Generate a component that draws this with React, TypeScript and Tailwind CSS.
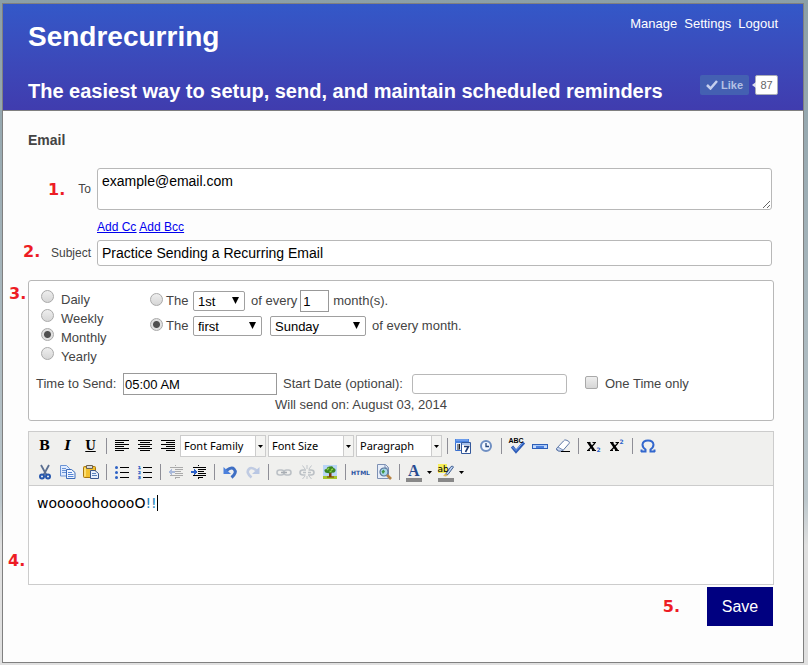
import type { ReactNode } from 'react';

const NAV = ['Manage', 'Settings', 'Logout'];

const FREQUENCIES = ['Daily', 'Weekly', 'Monthly', 'Yearly'];

const RADIO =
    'w-[13px] h-[13px] shrink-0 appearance-none rounded-full border border-[#a9a9a9] bg-linear-to-b from-[#eeeeee] to-[#d6d6d6] checked:bg-[radial-gradient(circle,#505050_0,#505050_3px,#e0e0e0_4px)]';

function Marker({ children, className }: { children: ReactNode; className: string }) {
    return (
        <span className={`absolute font-['Arial_Black','DejaVu_Sans',sans-serif] text-base leading-5 font-black text-[#ed1c24] ${className}`}>
            {children}
        </span>
    );
}

function Dropdown({ label, value, options, className }: { label: string; value: string; options: string[]; className: string }) {
    return (
        <span className={`relative inline-flex ${className}`}>
            <select
                aria-label={label}
                defaultValue={value}
                className="h-5 w-full appearance-none rounded-xs border border-[#a0a0a0] bg-white pl-1 text-black"
            >
                {options.map((o) => (
                    <option key={o}>{o}</option>
                ))}
            </select>
            <svg viewBox="0 0 7 7" className="pointer-events-none absolute top-[6px] right-[6px] h-[7px] w-[7px]">
                <path d="M0 0h7L3.5 7z" fill="#000" />
            </svg>
        </span>
    );
}

/* ---------- toolbar icons, all on a 20x20 grid ---------- */

function Icon({ children, crisp }: { children: ReactNode; crisp?: boolean }) {
    return (
        <svg viewBox="0 0 20 20" className="h-5 w-5 shrink-0" fill="none" shapeRendering={crisp ? 'crispEdges' : 'auto'} aria-hidden="true">
            {children}
        </svg>
    );
}

const BoldIcon = () => <span className="font-['DejaVu_Serif',serif] text-[13px] font-bold">B</span>;
const ItalicIcon = () => <span className="font-['DejaVu_Serif',serif] text-[13px] font-bold italic">I</span>;
const UnderlineIcon = () => <span className="font-['DejaVu_Serif',serif] text-xs font-bold underline">U</span>;

const ALIGN_ROWS = {
    left: 'M3 4h14M3 6h9M3 8h14M3 10h9M3 12h14M3 14h9',
    center: 'M3 4h14M5 6h10M3 8h14M5 10h10M3 12h14M5 14h10',
    right: 'M3 4h14M8 6h9M3 8h14M8 10h9M3 12h14M8 14h9',
};

const AlignIcon = ({ side }: { side: keyof typeof ALIGN_ROWS }) => (
    <Icon crisp>
        <path d={ALIGN_ROWS[side]} transform="translate(0 .5)" stroke="#000" />
    </Icon>
);

const CalendarIcon = () => (
    <Icon>
        <path d="M2.5 3.5h13v11h-13z" fill="#e8effb" stroke="#3b70cf" />
        <path d="M2 3h14v4H2z" fill="#4a83e0" />
        <path d="M3 4h12" stroke="#8fb5f5" />
        <path d="M4 9h3M4 11h3M4 13h3M6.500 8v5" stroke="#222" />
        <path d="M8.5 6.5h9v11h-9z" fill="#fff" stroke="#34599c" />
        <path d="M9 7h8v2H9z" fill="#a9c3ee" />
        <path d="M11 10.500h4.500L12.500 16" stroke="#1d3972" strokeWidth="1.600" />
    </Icon>
);

const ClockIcon = () => (
    <Icon>
        <circle cx="10" cy="10" r="5" fill="#f4f8ff" stroke="#6f8fc2" strokeWidth="2" />
        <path d="M10 7v3.500h3" stroke="#25457c" strokeWidth="1.300" />
    </Icon>
);

const SpellIcon = () => (
    <Icon>
        <path d="M5 10.500l4 5 8-9" stroke="#2e5db8" strokeWidth="3" />
        <path d="M5.500 11l3.500 3.500 7-8" stroke="#74a1ee" strokeWidth="1" />
        <text x="1.500" y="7" fontSize="7" fontWeight="bold" fontFamily="Liberation Sans, sans-serif" fill="#000">ABC</text>
    </Icon>
);

const RuleIcon = () => (
    <Icon crisp>
        <path d="M2 8h16v5H2z" fill="#2d5fb8" />
        <path d="M3 9h14v1H3z" fill="#a9c8f7" />
        <path d="M3 10h4v2H3zM13 10h4v2h-4z" fill="#c3d9fb" />
        <path d="M6 10h8v2H6z" fill="#4b80de" />
    </Icon>
);

const EraserIcon = () => (
    <Icon>
        <path d="M3.500 12.500l7-7.500q1-1.500 2.500-1l2.500 1.200q1.500 1 .5 2.300L9.500 15H5.500q-3-1-2-2.500z" fill="#fff" stroke="#5d77a6" />
        <path d="M3.500 12.500l1.500-1.500 5 3-1 1H5.500z" fill="#c8d6ef" stroke="#5d77a6" strokeWidth=".8" />
        <path d="M8 15.500h9" stroke="#000" />
    </Icon>
);

const ScriptIcon = ({ raised }: { raised?: boolean }) => (
    <Icon>
        <path d="M4.500 6.500l5.500 8" stroke="#000" strokeWidth="2.400" />
        <path d="M11 7l-7 7.500M3 6.500h3.500M8.500 6.500H12M3 14.500h3M8 14.500h4" stroke="#000" strokeWidth="1.200" />
        <text x="12.500" y={raised ? 8 : 16} fontSize="6" fontWeight="bold" fontFamily="DejaVu Sans, sans-serif" fill="#2b62c9">2</text>
    </Icon>
);

const OmegaIcon = () => (
    <Icon>
        <path d="M3 15.500h4.500v-2Q4.500 11.500 4.500 8.500 5 4.500 10 4.500q5 0 5.500 4 0 3-3 5v2H17M3.500 16v-2.500M16.500 16v-2.500" stroke="#3267cd" strokeWidth="2" />
    </Icon>
);

const CutIcon = () => (
    <Icon>
        <path d="M6 3l5.500 10M14 3L8.500 13" stroke="#5b6f91" strokeWidth="1.800" />
        <circle cx="7" cy="14.500" r="2" stroke="#2657ad" strokeWidth="2" />
        <circle cx="13" cy="14.500" r="2" stroke="#2657ad" strokeWidth="2" />
    </Icon>
);

const CopyIcon = () => (
    <Icon>
        <path d="M2.500 3.500h6l3 3v7.500h-9z" fill="#dfebff" stroke="#6a93d4" />
        <path d="M4 6.500h4M4 8.500h5M4 10.500h4" stroke="#6a93d4" />
        <path d="M8.500 7.500h5l3.500 3v6h-8.500z" fill="#f0f6ff" stroke="#3c6cba" />
        <path d="M10 10.500h4M10 12.500h5.500M10 14.500h5.500" stroke="#5584d4" />
    </Icon>
);

const PasteIcon = () => (
    <Icon>
        <rect x="2.500" y="4.500" width="12" height="11" rx="1" fill="#f2c12f" stroke="#a8760f" />
        <path d="M4 6v8.500" stroke="#ffe88d" strokeWidth="1.500" />
        <path d="M5.500 3.500h6v3h-6z" fill="#d7d9de" stroke="#6b6250" />
        <path d="M9.500 8.500h4.500l3.500 3v5h-8z" fill="#e6effd" stroke="#39578d" />
        <path d="M11 11.500h4M11 13.500h5" stroke="#5b82bb" />
    </Icon>
);

const BulletIcon = () => (
    <Icon>
        <path d="M8 5.500h9M8 10.500h9M8 15.500h9" stroke="#000" />
        <circle cx="4.500" cy="5.500" r="1.500" fill="#2d62c5" />
        <circle cx="4.500" cy="10.500" r="1.500" fill="#2d62c5" />
        <circle cx="4.500" cy="15.500" r="1.500" fill="#2d62c5" />
    </Icon>
);

const NumberIcon = () => (
    <Icon>
        <path d="M8 5.500h9M8 10.500h9M8 15.500h9" stroke="#000" />
        {[1, 2, 3].map((n) => (
            <text key={n} x="3" y={n * 5 + 2} fontSize="4" fontWeight="bold" fontFamily="DejaVu Sans, sans-serif" fill="#2d62c5" stroke="#2d62c5" strokeWidth=".3">{n}</text>
        ))}
    </Icon>
);

const OutdentIcon = () => (
    <Icon crisp>
        <path d="M4 5.500h13M9 7.500h8M9 9.500h6M9 11.500h8M4 13.500h13M9 15.500h5M9.500 3v1M9.500 16v1" stroke="#aaa" />
        <path d="M6 7L2.500 10 6 13v-2h3V9H6z" fill="#a9b9da" />
    </Icon>
);

const IndentIcon = () => (
    <Icon crisp>
        <path d="M4 5.500h13M9 7.500h8M9 9.500h6M9 11.500h8M4 13.500h13M9 15.500h5M9.500 3v1M9.500 16v1" stroke="#000" />
        <path d="M5 6.500L9 10l-4 3.500V11H2V9h3z" fill="#2c61c9" />
    </Icon>
);

const UndoIcon = () => (
    <Icon>
        <path d="M6.500 8.500q5-4 7.500-1.500 3.500 3.500-2.500 8.500" stroke="#3f6fc4" strokeWidth="3" />
        <path d="M3.500 5v7H11z" fill="#4c80dc" />
    </Icon>
);

const RedoIcon = () => (
    <Icon>
        <path d="M13.500 8.500Q8.500 4.500 6 7q-3.500 3.500 2.500 8.500" stroke="#c0cbe2" strokeWidth="2.600" />
        <path d="M16.500 5v7H9z" fill="#b9c7e3" />
    </Icon>
);

const LinkIcon = () => (
    <Icon>
        <rect x="3" y="8" width="7" height="5" rx="2.500" stroke="#bcc1c6" strokeWidth="1.600" />
        <rect x="10" y="8" width="7" height="5" rx="2.500" stroke="#bcc1c6" strokeWidth="1.600" />
        <path d="M7 10.500h6" stroke="#a8adb3" strokeWidth="1.500" />
    </Icon>
);

const UnlinkIcon = () => (
    <Icon>
        <path d="M9 8H6q-3 0-3 2.500T6 13h2.500M11.500 8H14q3 0 3 2.500T14 13h-3M6 10.500h3M11 10.500h3" stroke="#bcc1c6" strokeWidth="1.600" />
        <path d="M10 3v4M5.500 3.500L8 7M14.500 3.500L12 7M10 14v3M5.500 17L8 14M14.500 17L12 14" stroke="#c0c5ca" />
    </Icon>
);

const ImageIcon = () => (
    <Icon>
        <path d="M3 3h14v14H3z" fill="#b9d5f8" />
        <path d="M3 14h14v3H3z" fill="#a5c52c" />
        <path d="M9 10h2.500v4.500H14v1H7v-1h2z" fill="#7b3d0c" />
        <path d="M4.500 9q-.5-2 2-2 .5-3 3.500-2.500 3-1 3.500 1.500 2.500.5 2 3-1 2.500-3.500 1.500-2 1.500-4 .5-3 .5-3.500-2z" fill="#398521" />
        <path d="M7 8l2-2M11 8l2-1M9.500 9.500h2" stroke="#8bd04a" strokeWidth="1.400" />
    </Icon>
);

const HtmlIcon = () => <span className="font-['DejaVu_Sans',sans-serif] text-[6px] font-bold text-[#2c55a3]">HTML</span>;

const PreviewIcon = () => (
    <Icon>
        <path d="M3.500 2.500h8l3 3v11h-11z" fill="#e7eef9" stroke="#7d90b4" />
        <path d="M11 2.500v3.500h3.500" stroke="#7d90b4" />
        <circle cx="10" cy="10" r="4" fill="#a9d8eb" stroke="#557199" strokeWidth="1.200" />
        <path d="M7.500 9.500l2-2 1.500 2-2 2.500z" fill="#409546" />
        <path d="M13 13l4 4" stroke="#b58243" strokeWidth="2.600" />
    </Icon>
);

const TextColorIcon = () => (
    <Icon>
        <text x="4" y="14" fontSize="16" fontWeight="bold" fontFamily="Liberation Serif, serif" fill="#284c91">A</text>
        <path d="M2 16h16v4H2z" fill="#888" />
    </Icon>
);

const HighlightIcon = () => (
    <Icon>
        <path d="M2 2h9v9H2z" fill="#f6ee5a" />
        <path d="M9 13l6-8.500q2-1 2.500.500L12 12.500z" fill="#bfd3f5" stroke="#42608f" />
        <path d="M7 14l2-2 3 1-2 1.500z" fill="#e1be58" />
        <text x="1.500" y="10" fontSize="9" fontFamily="DejaVu Sans, sans-serif" fill="#000">ab</text>
        <path d="M2 16h16v4H2z" fill="#888" />
    </Icon>
);

/* ---------- toolbar pieces ---------- */

function Tool({ label, children }: { label: string; children: ReactNode }) {
    return (
        <button type="button" aria-label={label} className="flex h-[22px] w-[23px] shrink-0 items-center justify-center text-black">
            {children}
        </button>
    );
}

function SplitTool({ label, children }: { label: string; children: ReactNode }) {
    return (
        <button type="button" aria-label={label} className="flex h-[22px] w-8 shrink-0 items-center gap-[3px] pl-px">
            {children}
            <svg viewBox="0 0 5 3" className="h-[3px] w-[5px]"><path d="M0 0h5L2.500 3z" fill="#000" /></svg>
        </button>
    );
}

const Divider = () => (
    <span className="flex w-2 shrink-0 justify-center">
        <span className="h-4 w-px bg-[#8e8e96]" />
    </span>
);

function ToolSelect({ label }: { label: string }) {
    return (
        <span className="flex w-[88px] shrink-0 pl-px">
            <span className="relative flex w-[86px]">
                <select
                    aria-label={label}
                    className="h-[22px] w-full appearance-none border border-[#ccc] bg-white pl-[3px] font-['Noto_Sans',sans-serif] text-[11px] text-black"
                >
                    <option>{label}</option>
                </select>
                <span className="pointer-events-none absolute top-0 right-0 flex h-[22px] w-[11px] items-center justify-center border border-[#ccc] bg-[#f4f4f2]">
                    <svg viewBox="0 0 5 3" className="h-[3px] w-[5px]"><path d="M0 0h5L2.500 3z" fill="#000" /></svg>
                </span>
            </span>
        </span>
    );
}

function Editor() {
    return (
        <div className="relative mt-[10px] border border-[#ccc] bg-white">
            <div className="border-b border-[#ccc] bg-[#f0f0ee] pt-px pl-1">
                <div className="flex h-[26px] items-center">
                    <Tool label="Bold"><BoldIcon /></Tool>
                    <Tool label="Italic"><ItalicIcon /></Tool>
                    <Tool label="Underline"><UnderlineIcon /></Tool>
                    <Divider />
                    <Tool label="Align left"><AlignIcon side="left" /></Tool>
                    <Tool label="Align center"><AlignIcon side="center" /></Tool>
                    <Tool label="Align right"><AlignIcon side="right" /></Tool>
                    <ToolSelect label="Font Family" />
                    <ToolSelect label="Font Size" />
                    <ToolSelect label="Paragraph" />
                    <Divider />
                    <Tool label="Insert date"><CalendarIcon /></Tool>
                    <Tool label="Insert time"><ClockIcon /></Tool>
                    <Divider />
                    <Tool label="Spellcheck"><SpellIcon /></Tool>
                    <Tool label="Horizontal line"><RuleIcon /></Tool>
                    <Tool label="Remove formatting"><EraserIcon /></Tool>
                    <Divider />
                    <Tool label="Subscript"><ScriptIcon /></Tool>
                    <Tool label="Superscript"><ScriptIcon raised /></Tool>
                    <Divider />
                    <Tool label="Special character"><OmegaIcon /></Tool>
                </div>
                <div className="flex h-[26px] items-center">
                    <Tool label="Cut"><CutIcon /></Tool>
                    <Tool label="Copy"><CopyIcon /></Tool>
                    <Tool label="Paste"><PasteIcon /></Tool>
                    <Divider />
                    <Tool label="Bulleted list"><BulletIcon /></Tool>
                    <Tool label="Numbered list"><NumberIcon /></Tool>
                    <Divider />
                    <Tool label="Outdent"><OutdentIcon /></Tool>
                    <Tool label="Indent"><IndentIcon /></Tool>
                    <Divider />
                    <Tool label="Undo"><UndoIcon /></Tool>
                    <Tool label="Redo"><RedoIcon /></Tool>
                    <Divider />
                    <Tool label="Insert link"><LinkIcon /></Tool>
                    <Tool label="Unlink"><UnlinkIcon /></Tool>
                    <Tool label="Insert image"><ImageIcon /></Tool>
                    <Divider />
                    <Tool label="Edit HTML source"><HtmlIcon /></Tool>
                    <Tool label="Preview"><PreviewIcon /></Tool>
                    <Divider />
                    <SplitTool label="Text color"><TextColorIcon /></SplitTool>
                    <SplitTool label="Highlight color"><HighlightIcon /></SplitTool>
                </div>
            </div>
            <div
                role="textbox"
                aria-label="Message"
                contentEditable
                suppressContentEditableWarning
                className="min-h-[98px] px-2 py-[7px] font-['DejaVu_Sans',sans-serif] text-sm leading-5 text-black outline-none"
            >
                wooooohooooO<span className="border-r border-black text-[#2080b8]">!!</span>
            </div>
            <Marker className="top-[119px] -left-[21px]">4.</Marker>
        </div>
    );
}

function Header() {
    return (
        <header className="border-b border-[#808080] bg-linear-to-b from-[#3358c8] to-[#403cae] px-[25px] pb-[7px] text-white">
            <div className="flex items-start justify-between">
                <h1 className="pt-[17px] text-[28px] leading-8 font-bold">Sendrecurring</h1>
                <nav className="flex gap-[7px] pt-[10px] text-[13px] leading-5">
                    {NAV.map((item) => (
                        <a key={item} href="#">{item}</a>
                    ))}
                </nav>
            </div>
            <div className="flex items-start justify-between pt-[22px]">
                <h2 className="pt-1 text-xl leading-6 font-bold">
                    The easiest way to setup, send, and maintain scheduled reminders
                </h2>
                <div className="flex items-center gap-[6px]">
                    <button
                        type="button"
                        className="flex h-5 w-[49px] items-center justify-center gap-[3px] rounded-xs bg-[#4460b2] text-[11px] font-bold text-[#b4c0e4]"
                    >
                        <svg viewBox="0 0 12 10" className="h-[10px] w-3" fill="none">
                            <path d="M1 5l3.500 3.500L11 1" stroke="#c5d0ee" strokeWidth="2.500" />
                        </svg>
                        Like
                    </button>
                    <span className="relative flex h-5 w-[23px] items-center justify-center rounded-xs border border-[#a9adb8] bg-white text-[11px] text-[#666]">
                        <svg viewBox="0 0 4 6" className="absolute top-[6px] -left-1 h-[6px] w-1"><path d="M4 0v6L0 3z" fill="#dfe2ec" /></svg>
                        87
                    </span>
                </div>
            </div>
        </header>
    );
}

function Schedule() {
    return (
        <fieldset className="relative mt-[14px] rounded-[3px] border border-[#b8b8b8] bg-white px-[7px] pt-[9px] pb-[5px]">
            <Marker className="top-[3px] -left-[20px]">3.</Marker>
            <div className="flex items-start">
                <div className="w-[109px] pl-[5px]">
                    {FREQUENCIES.map((f) => (
                        <label key={f} className="flex h-[19px] items-start gap-[7px] leading-[19px]">
                            <input type="radio" name="frequency" defaultChecked={f === 'Monthly'} className={RADIO} />
                            {f}
                        </label>
                    ))}
                </div>
                <div className="pl-[5px]">
                    <div className="flex items-center">
                        <label className="flex w-[43px] items-center gap-[3px]">
                            <input type="radio" name="pattern" className={`${RADIO} mb-1`} />
                            The
                        </label>
                        <Dropdown label="Day of month" value="1st" options={['1st', '2nd', '3rd']} className="w-[52px]" />
                        <label htmlFor="interval" className="pr-[3px] pl-[6px]">of every</label>
                        <input id="interval" defaultValue="1" className="h-[22px] w-[29px] border border-[#999] bg-white px-0.5 text-black" />
                        <span className="pl-1">month(s).</span>
                    </div>
                    <div className="flex items-center pt-1">
                        <label className="flex w-[43px] items-center gap-[3px]">
                            <input type="radio" name="pattern" defaultChecked className={`${RADIO} mb-1`} />
                            The
                        </label>
                        <Dropdown label="Week" value="first" options={['first', 'second', 'third']} className="w-[69px]" />
                        <Dropdown label="Weekday" value="Sunday" options={['Sunday', 'Monday', 'Tuesday']} className="ml-2 w-24" />
                        <span className="pl-[6px]">of every month.</span>
                    </div>
                </div>
            </div>
            <div className="flex items-center pt-[7px]">
                <label htmlFor="time" className="w-[87px]">Time to Send:</label>
                <input id="time" defaultValue="05:00 AM" className="h-[22px] w-[154px] border border-[#999] bg-white px-px text-black" />
                <label htmlFor="start" className="w-[135px] pl-[6px]">Start Date (optional):</label>
                <input id="start" className="h-5 w-[155px] rounded-[3px] border border-[#b8b8b8] bg-white px-1 text-black" />
                <label className="flex items-center gap-[7px] pl-[18px]">
                    <input
                        type="checkbox"
                        className="mb-1 h-[13px] w-[13px] appearance-none rounded-xs border border-[#a9a9a9] bg-linear-to-b from-[#eeeeee] to-[#d6d6d6]"
                    />
                    One Time only
                </label>
            </div>
            <p className="pl-[239px] leading-5">Will send on: August 03, 2014</p>
        </fieldset>
    );
}

export default function App() {
    return (
        <div className="flex min-h-screen bg-linear-to-b from-[#8b9fa7] via-[#bcc7cc] via-75% to-[#e0e0e0] to-82% pt-[3px] pr-1 pb-0.5 pl-0.5 font-['Liberation_Sans',Arial,sans-serif] text-[13px] text-[#444]">
            <div className="flex-1 border border-[#808080] bg-[#fdfdfd]">
                <Header />
                <main className="pt-[19px] pr-[29px] pb-8 pl-[25px]">
                    <h3 className="text-sm leading-5 font-bold">Email</h3>
                    <form onSubmit={(e) => e.preventDefault()}>
                        <div className="relative mt-[18px] flex items-center gap-[6px] pr-0.5">
                            <Marker className="top-3 left-[20px]">1.</Marker>
                            <label htmlFor="to" className="w-[63px] text-right text-xs">To</label>
                            <textarea
                                id="to"
                                defaultValue="example@email.com"
                                className="h-[42px] min-w-0 flex-1 rounded-[3px] border border-[#b8b8b8] bg-white px-1 py-0.5 text-sm leading-5 text-black"
                            />
                        </div>
                        <div className="flex gap-[3px] pt-2 pl-[69px] text-xs leading-[18px] text-[#0000ee] underline">
                            <a href="#">Add Cc</a>
                            <a href="#">Add Bcc</a>
                        </div>
                        <div className="relative flex items-center gap-[6px] pt-1 pr-0.5">
                            <Marker className="top-[6px] -left-[5px]">2.</Marker>
                            <label htmlFor="subject" className="w-[63px] text-right text-xs">Subject</label>
                            <input
                                id="subject"
                                defaultValue="Practice Sending a Recurring Email"
                                className="h-[26px] min-w-0 flex-1 rounded-[3px] border border-[#b8b8b8] bg-white px-1 text-sm text-black"
                            />
                        </div>
                        <Schedule />
                        <Editor />
                        <div className="relative flex justify-end pt-0.5 pr-px">
                            <Marker className="top-3 right-[94px]">5.</Marker>
                            <button type="submit" className="h-[39px] w-[66px] bg-[#000080] text-base text-white">Save</button>
                        </div>
                    </form>
                </main>
            </div>
        </div>
    );
}
